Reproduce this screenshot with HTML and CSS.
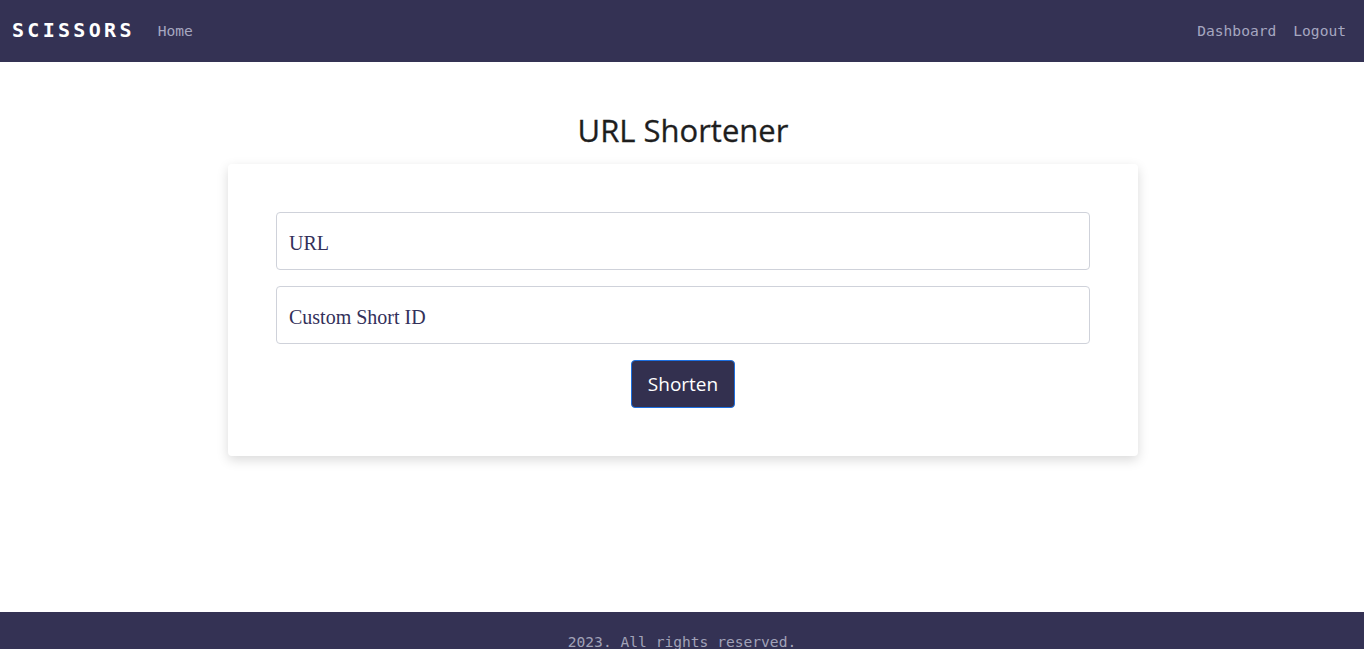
FILE: index.html
```html
<!DOCTYPE html>
<html lang="en">
<head>
<meta charset="utf-8">
<title>Scissors</title>
<link rel="stylesheet" href="styles.css">
</head>
<body>
<nav class="navbar">
  <div class="nav-left">
    <span class="brand">SCISSORS</span>
    <a class="nav-link" href="#">Home</a>
  </div>
  <div class="nav-right">
    <a class="nav-link" href="#">Dashboard</a>
    <a class="nav-link" href="#">Logout</a>
  </div>
</nav>
<main class="main">
  <h1 class="title">URL Shortener</h1>
  <form class="card">
    <input class="field" type="text" placeholder="URL">
    <input class="field" type="text" placeholder="Custom Short ID">
    <button class="btn" type="button">Shorten</button>
  </form>
</main>
<footer class="footer">
  <p class="footer-text">2023. All rights reserved.</p>
</footer>
</body>
</html>
```
FILE: styles.css
```css
* { box-sizing: border-box; }
body {
  margin: 0;
  font-family: "Open Sans", "Noto Sans", sans-serif;
  background: #fff;
}
.navbar {
  height: 62px;
  background: #343254;
  display: flex;
  align-items: center;
  justify-content: space-between;
  padding: 0 18px 2px 12px;
}
.nav-left, .nav-right {
  display: flex;
  align-items: center;
}
.nav-left { gap: 23px; }
.nav-right { gap: 17px; }
.brand {
  font-family: "DejaVu Sans Mono", monospace;
  font-weight: bold;
  font-size: 20px;
  letter-spacing: 3.3px;
  color: #ffffff;
}
.nav-link {
  font-family: "DejaVu Sans Mono", monospace;
  font-size: 14.6px;
  color: #a6a7c0;
  text-decoration: none;
}
.main {
  height: 550px;
  display: flex;
  flex-direction: column;
  align-items: center;
  padding: 48px 0 0 2px;
}
.title {
  margin: 0 0 14px;
  font-size: 31px;
  font-weight: 500;
  line-height: 40px;
  color: #1e1e1e;
  -webkit-text-stroke: 0.3px #1e1e1e;
}
.card {
  width: 910px;
  background: #fff;
  border-radius: 4px;
  box-shadow: 0 4px 12px rgba(0,0,0,0.15);
  padding: 48px;
  display: flex;
  flex-direction: column;
  align-items: center;
  gap: 16px;
}
.field {
  width: 100%;
  height: 58px;
  border: 1px solid #cfd2da;
  border-radius: 4px;
  padding: 4px 12px 0;
  font-family: "Liberation Serif", serif;
  font-size: 20px;
  color: #33305a;
  outline: none;
}
.field::placeholder { color: #33305a; opacity: 1; }
.btn {
  width: 104px;
  height: 48px;
  background: #33304f;
  border: 1px solid #1d6fe0;
  border-radius: 4px;
  color: #fff;
  font-family: "Open Sans", "Noto Sans", sans-serif;
  font-size: 19px;
  padding: 0;
}
.footer {
  background: #343254;
  padding: 21px 0;
  text-align: center;
}
.footer-text {
  margin: 0;
  font-family: "DejaVu Sans Mono", monospace;
  font-size: 14.6px;
  color: #a1a2b8;
}
```
